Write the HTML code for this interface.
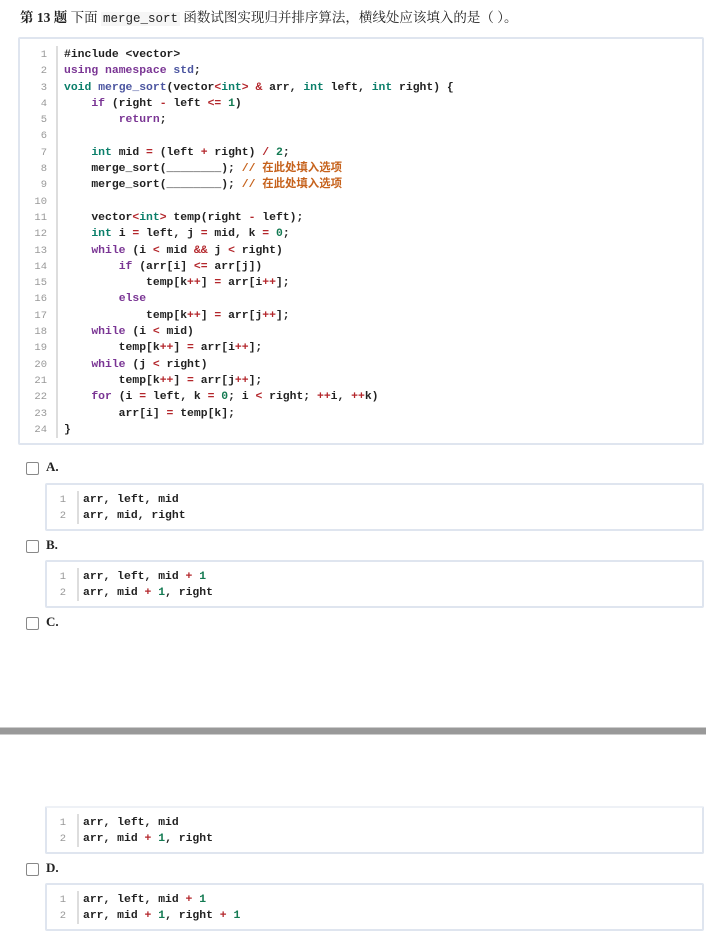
<!DOCTYPE html>
<html><head><meta charset="utf-8">
<style>
*{margin:0;padding:0;box-sizing:border-box}
body{width:706px;height:937px;background:#fff;position:relative;overflow:hidden;font-family:"Liberation Serif","Noto Serif CJK SC",serif;color:#222}
.title{position:absolute;left:20px;top:6px;font-size:13.5px;white-space:nowrap}
.title b{font-weight:bold}
.title code{font-family:"Liberation Mono",monospace;font-size:12.5px;background:#f6f6f6;padding:0 2px}
.box{position:absolute;left:45px;width:659px;border:2px solid #dfe5ef;border-radius:2px;background:#fff}
.ln{position:absolute;width:30px;text-align:right;font-family:"Liberation Mono",monospace;font-size:10.5px;color:#999;font-weight:normal}
.bar{position:absolute;width:2px;background:#ddd}
pre{position:absolute;font-family:"Liberation Mono","Noto Sans CJK SC",monospace;font-size:11.4px;line-height:16.3px;color:#222;font-weight:600;white-space:pre}
.k{color:#7a3594}.t{color:#0b7f6a}.o{color:#b3262b}.n{color:#137a52}.f{color:#4b55a0}.c{color:#c6621c}
.cb{position:absolute;left:26px;width:13px;height:13px;border:1.5px solid #888;border-radius:2px}
.lab{position:absolute;left:46px;font-weight:bold;font-size:13px}
</style></head><body>
<div class="title"><b>第 13 题</b> 下面 <code>merge_sort</code> 函数试图实现归并排序算法，横线处应该填入的是（ ）。</div>

<div class="box" style="left:18px;width:686px;top:37px;height:408px"></div>
<pre class="ln" style="left:17px;top:47px">1
2
3
4
5
6
7
8
9
10
11
12
13
14
15
16
17
18
19
20
21
22
23
24</pre>
<div class="bar" style="left:56px;top:46px;height:392px"></div>
<pre style="left:64px;top:47px">#include &lt;vector&gt;
<span class="k">using</span> <span class="k">namespace</span> <span class="f">std</span>;
<span class="t">void</span> <span class="f">merge_sort</span>(vector<span class="o">&lt;</span><span class="t">int</span><span class="o">&gt;</span> <span class="o">&amp;</span> arr, <span class="t">int</span> left, <span class="t">int</span> right) {
    <span class="k">if</span> (right <span class="o">-</span> left <span class="o">&lt;=</span> <span class="n">1</span>)
        <span class="k">return</span>;

    <span class="t">int</span> mid <span class="o">=</span> (left <span class="o">+</span> right) <span class="o">/</span> <span class="n">2</span>;
    merge_sort(________); <span class="c">// 在此处填入选项</span>
    merge_sort(________); <span class="c">// 在此处填入选项</span>

    vector<span class="o">&lt;</span><span class="t">int</span><span class="o">&gt;</span> temp(right <span class="o">-</span> left);
    <span class="t">int</span> i <span class="o">=</span> left, j <span class="o">=</span> mid, k <span class="o">=</span> <span class="n">0</span>;
    <span class="k">while</span> (i <span class="o">&lt;</span> mid <span class="o">&amp;&amp;</span> j <span class="o">&lt;</span> right)
        <span class="k">if</span> (arr[i] <span class="o">&lt;=</span> arr[j])
            temp[k<span class="o">++</span>] <span class="o">=</span> arr[i<span class="o">++</span>];
        <span class="k">else</span>
            temp[k<span class="o">++</span>] <span class="o">=</span> arr[j<span class="o">++</span>];
    <span class="k">while</span> (i <span class="o">&lt;</span> mid)
        temp[k<span class="o">++</span>] <span class="o">=</span> arr[i<span class="o">++</span>];
    <span class="k">while</span> (j <span class="o">&lt;</span> right)
        temp[k<span class="o">++</span>] <span class="o">=</span> arr[j<span class="o">++</span>];
    <span class="k">for</span> (i <span class="o">=</span> left, k <span class="o">=</span> <span class="n">0</span>; i <span class="o">&lt;</span> right; <span class="o">++</span>i, <span class="o">++</span>k)
        arr[i] <span class="o">=</span> temp[k];
}</pre>

<div class="cb" style="top:462px"></div><div class="lab" style="top:459px">A.</div>
<div class="box" style="top:483px;height:48px"></div>
<pre class="ln" style="left:36px;top:492px">1
2</pre>
<div class="bar" style="left:77px;top:491px;height:33px"></div>
<pre style="left:83px;top:492px">arr, left, mid
arr, mid, right</pre>

<div class="cb" style="top:540px"></div><div class="lab" style="top:537px">B.</div>
<div class="box" style="top:560px;height:48px"></div>
<pre class="ln" style="left:36px;top:569px">1
2</pre>
<div class="bar" style="left:77px;top:568px;height:33px"></div>
<pre style="left:83px;top:569px">arr, left, mid <span class="o">+</span> <span class="n">1</span>
arr, mid <span class="o">+</span> <span class="n">1</span>, right</pre>

<div class="cb" style="top:617px"></div><div class="lab" style="top:614px">C.</div>

<div style="position:absolute;left:0;top:727px;width:706px;height:8px;background:#999;border-top:1px solid #ccc;border-bottom:1px solid #ccc"></div>

<div class="box" style="top:806px;height:48px;border-top-color:#eef1f6"></div>
<pre class="ln" style="left:36px;top:815px">1
2</pre>
<div class="bar" style="left:77px;top:814px;height:33px"></div>
<pre style="left:83px;top:815px">arr, left, mid
arr, mid <span class="o">+</span> <span class="n">1</span>, right</pre>

<div class="cb" style="top:863px"></div><div class="lab" style="top:860px">D.</div>
<div class="box" style="top:883px;height:48px"></div>
<pre class="ln" style="left:36px;top:892px">1
2</pre>
<div class="bar" style="left:77px;top:891px;height:33px"></div>
<pre style="left:83px;top:892px">arr, left, mid <span class="o">+</span> <span class="n">1</span>
arr, mid <span class="o">+</span> <span class="n">1</span>, right <span class="o">+</span> <span class="n">1</span></pre>
</body></html>
